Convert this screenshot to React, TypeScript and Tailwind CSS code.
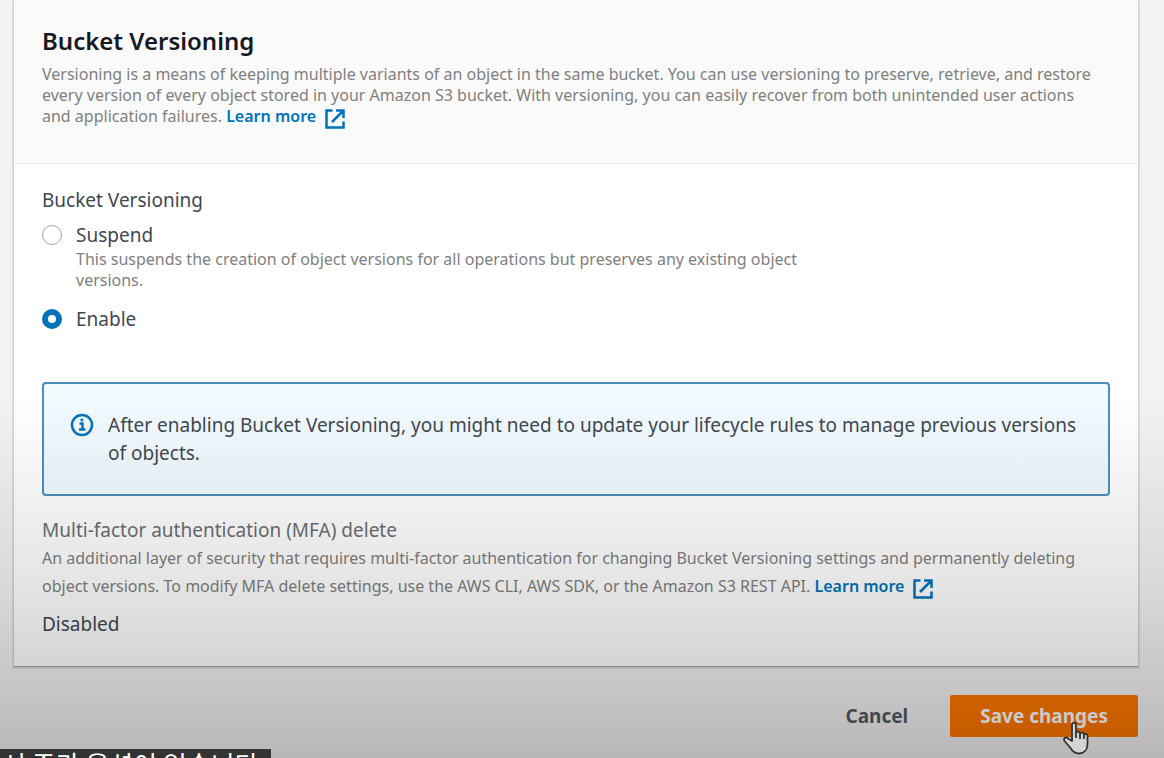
import type { ReactNode } from "react";

const OPTIONS = [
  {
    id: "suspend",
    label: "Suspend",
    hint: "This suspends the creation of object versions for all operations but preserves any existing object versions.",
  },
  { id: "enable", label: "Enable", hint: "" },
];

export default function App() {
  return (
    <div className="relative min-h-screen overflow-hidden bg-[#f2f2f2] font-['Noto_Sans',sans-serif] text-[#414750]">
      <main className="pl-[14px] pr-[26px]">
        <section className="border-b border-[#a9a9a9] bg-white shadow-[0_0_2px_1px_rgba(0,0,0,0.2)]">
          <header className="border-b border-[#eeeeee] bg-[#fafafa] pt-[25px] pr-9 pb-[33px] pl-7">
            <h1 className="text-[24px] leading-8 font-semibold text-[#16191f]">Bucket Versioning</h1>
            <p className="pt-[7px] text-[16px] leading-[21px] text-[#808080]">
              Versioning is a means of keeping multiple variants of an object in the same bucket. You can use versioning to
              preserve, retrieve, and restore every version of every object stored in your Amazon S3 bucket. With versioning,
              you can easily recover from both unintended user actions and application failures. <LearnMore />
            </p>
          </header>

          <div className="px-7 pt-[22px] pb-7">
            <fieldset>
              <legend className="text-[19px] leading-7">Bucket Versioning</legend>
              {OPTIONS.map((o) => (
                <div key={o.id} className="mt-[7px] mb-[14px] flex max-w-[780px] gap-[14px]">
                  <input
                    type="radio"
                    name="versioning"
                    id={o.id}
                    defaultChecked={o.id === "enable"}
                    className="mt-1 size-5 shrink-0 appearance-none rounded-full border border-[#a5a5a5] bg-white checked:border-[6px] checked:border-[#0073bb]"
                  />
                  <div>
                    <label htmlFor={o.id} className="block text-[19px] leading-7">
                      {o.label}
                    </label>
                    {o.hint && <p className="text-[16px] leading-[21px] text-[#808080]">{o.hint}</p>}
                  </div>
                </div>
              ))}
            </fieldset>

            <div
              role="note"
              className="mt-[35px] flex gap-[14px] rounded-sm border-2 border-[#4a90bb] bg-[#f1faff] px-[26px] py-[27px]"
            >
              <InfoIcon />
              <p className="text-[19px] leading-7">
                After enabling Bucket Versioning, you might need to update your lifecycle rules to manage previous versions of
                objects.
              </p>
            </div>

            <h2 className="mt-5 text-[19px] leading-7 text-[#6a6e73]">Multi-factor authentication (MFA) delete</h2>
            <p className="text-[16px] leading-7 text-[#808080]">
              An additional layer of security that requires multi-factor authentication for changing Bucket Versioning settings
              and permanently deleting object versions. To modify MFA delete settings, use the AWS CLI, AWS SDK, or the Amazon
              S3 REST API. <LearnMore />
            </p>
            <p className="mt-[10px] text-[19px] leading-7">Disabled</p>
          </div>
        </section>

        <div className="mt-7 flex justify-end gap-3">
          <ActionButton className="text-[#545b64]">Cancel</ActionButton>
          <ActionButton className="bg-[#ff7700] text-white">Save changes</ActionButton>
        </div>
      </main>

      {/* player shade over the lower part of the frame */}
      <div className="pointer-events-none absolute inset-x-0 bottom-0 h-[360px] bg-linear-to-b from-black/0 via-black/10 to-black/24" />

      <HandCursor />
      <div className="absolute bottom-0 left-0 h-[9px] overflow-hidden bg-[#333333] pr-3 pl-[2px]">
        <p className="text-[26px] leading-[30px] text-white font-['Noto_Sans_CJK_KR',sans-serif]">서 주가 옵션이 있습니다</p>
      </div>
    </div>
  );
}

function LearnMore() {
  return (
    <a href="#learn-more" className="font-semibold whitespace-nowrap text-[#0073bb]">
      Learn more
      <svg
        viewBox="0 0 22 22"
        fill="none"
        stroke="currentColor"
        strokeWidth="2.5"
        className="ml-2 inline size-[22px] align-[-8px]"
      >
        <path d="M8.5 2.5H2.5v17h17v-6M12 2.5h7.5V10M19.5 2.5L8 14" />
      </svg>
    </a>
  );
}

function InfoIcon() {
  return (
    <svg viewBox="0 0 24 24" fill="none" stroke="#0073bb" strokeWidth="2.4" className="mt-[2px] size-6 shrink-0">
      <circle cx="12" cy="12" r="10" />
      <path d="M9.500 10.500h3V16M9 16.500h6.500M10.500 7h2.800" />
    </svg>
  );
}

function ActionButton({ className, children }: { className: string; children: ReactNode }) {
  return (
    <button type="button" className={`h-[42px] rounded-xs px-[30px] text-[19px] leading-7 font-bold ${className}`}>
      {children}
    </button>
  );
}

function HandCursor() {
  return (
    <svg
      viewBox="0 0 26 34"
      fill="#d4d4d4"
      stroke="#333333"
      strokeWidth="1.8"
      strokeLinejoin="round"
      className="pointer-events-none absolute right-[75px] bottom-[3px] h-[34px] w-[26px]"
    >
      <path d="M9 20V4c0-3 4-3 4 0v8c0-2 4-2 4 1 0-2 4-2 4 1 0-2 3.500-1.500 3.500 1v8c0 6-3.500 9.500-8.500 9.500-4 0-6.500-2-8.500-5.500L1.500 20c-1.500-3 1.500-4.500 3.500-2.500z" />
      <path d="M13 11v6M17 13v5M21 14v4" fill="none" />
    </svg>
  );
}
